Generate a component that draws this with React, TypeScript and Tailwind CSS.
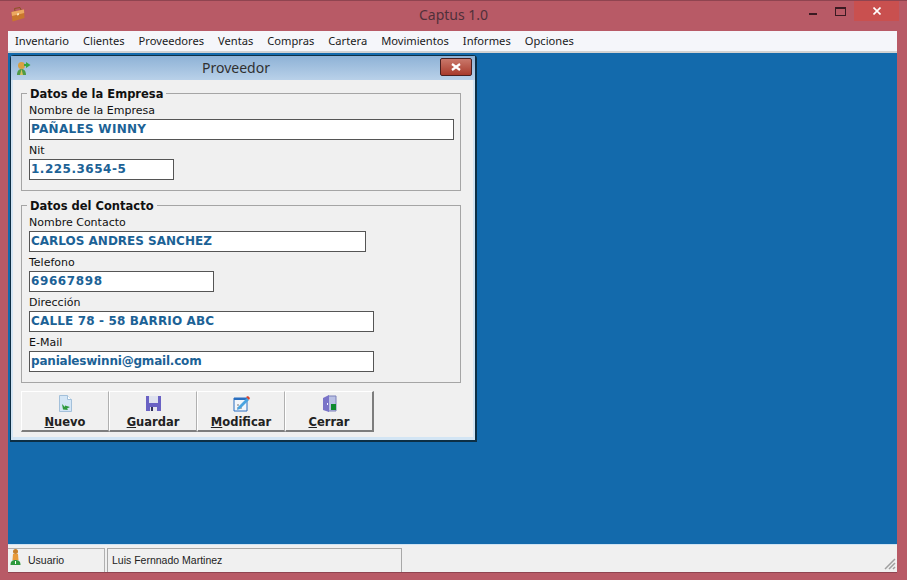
const sans = "font-['DejaVu_Sans',sans-serif]";

function Field({ label, value, width, mt, track }: { label: string; value: string; width: string; mt: string; track: string }) {
  return (
    <div className={mt}>
      <div className={`h-[13px] text-[11px] leading-[13px] text-[#111] whitespace-nowrap ${sans}`}>{label}</div>
      <div className={`${width} mt-[2px] h-[21px] bg-white border border-[#555] pl-[1px] text-[12px] leading-[18px] font-bold text-[#1c6296] whitespace-nowrap ${track} ${sans}`}>
        {value}
      </div>
    </div>
  );
}

function Group({ title, height, children, mt }: { title: string; height: string; children: React.ReactNode; mt: string }) {
  return (
    <div className={`relative ${height} ${mt} w-[440px] border border-[#a5a5a5] pl-[7px]`}>
      <div className={`absolute left-[5px] -top-[7px] bg-[#f0f0f0] px-[3px] text-[11.5px] leading-[14px] font-bold text-[#111] whitespace-nowrap ${sans}`}>{title}</div>
      {children}
    </div>
  );
}

function ToolButton({ icon, u, post, w, edge }: { icon: React.ReactNode; u: string; post: string; w: string; edge: string }) {
  return (
    <div className={`${w} h-[41px] flex flex-col items-center border-t border-l border-white border-b-2 border-b-[#7d7d7d] ${edge} bg-[#f0f0f0] pt-[3px]`}>
      <div className="h-[17px] w-[17px]">{icon}</div>
      <div className={`mt-[3px] text-[11.5px] leading-[14px] font-bold text-[#222] ${sans}`}>
        <span className="underline">{u}</span>{post}
      </div>
    </div>
  );
}

const NewIcon = (
  <svg viewBox="0 0 17 17" className="w-[17px] h-[17px]">
    <path d="M2.500.5h8l4 4v12h-12z" fill="#d4e6f6" stroke="#a3c0da" />
    <path d="M10.500.5v4h4" fill="#fff" stroke="#a3c0da" />
    <path d="M5 9l3 3V10.500l5 1.500-3 1.500 1 1.500-5-.5z" fill="#2f9a3e" />
  </svg>
);
const SaveIcon = (
  <svg viewBox="0 0 17 17" className="w-[17px] h-[17px]">
    <path d="M1 1h15v15H1z" fill="#6a62c4" />
    <path d="M4 1h9v7H4z" fill="#dfe2ee" />
    <path d="M5 12h7v4H5z" fill="#e6e6ef" />
    <path d="M6 12h2v4H6z" fill="#30305a" />
  </svg>
);
const EditIcon = (
  <svg viewBox="0 0 17 17" className="w-[17px] h-[17px]">
    <path d="M1 3h13v13H1z" fill="#f3f6fb" stroke="#2a6fc0" />
    <path d="M1 3h13v2H1z" fill="#2a6fc0" />
    <path d="M4 10h2M4 13h5" stroke="#777" />
    <path d="M5 12l9-9 2 2-9 9-3 1z" fill="#4aa3e0" />
    <path d="M13 2l2-1 2 2-1 2z" fill="#d8442e" />
  </svg>
);
const DoorIcon = (
  <svg viewBox="0 0 17 17" className="w-[17px] h-[17px]">
    <path d="M7 1h8v15H7z" fill="#b9c0e4" stroke="#7a80b8" />
    <path d="M2 3l6-3v17l-6-2z" fill="#7a74c8" />
    <path d="M10 9h5v6h-5z" fill="#0f8a2e" />
    <path d="M6 8h1v2H6z" fill="#f2f2ff" />
  </svg>
);
const BriefcaseIcon = (
  <svg viewBox="0 0 14 15" className="w-[14px] h-[15px]">
    <path d="M4 4L3.500 1.500 9 .5 10 3" fill="none" stroke="#8a5424" />
    <path d="M.5 5L13 2.500l.5 8.500L1.500 14.500z" fill="#c9772d" />
    <path d="M.5 5L13 2.500l.2 3.500L1 9z" fill="#eba860" />
    <path d="M6 6.500l2-.5v2l-2 .5z" fill="#f9e2b4" />
  </svg>
);
const PersonAddIcon = (
  <svg viewBox="0 0 15 15" className="w-[15px] h-[15px]">
    <circle cx="5.500" cy="4.500" r="3.500" fill="#d8a040" />
    <path d="M1 14c0-4 2-6 4.500-6S10 10 10 14z" fill="#4f9a45" />
    <path d="M4 14l1.500-6L7 14z" fill="#d8c060" />
    <path d="M10 1v2H8v2h2v2l4.500-3z" fill="#37a63f" />
  </svg>
);
const UserIcon = (
  <svg viewBox="0 0 11 18" className="w-[11px] h-[18px]">
    <circle cx="5.500" cy="3.500" r="2.500" fill="#c8802a" />
    <path d="M3 6h5l.5 6h-6z" fill="#e89a3a" />
    <path d="M.5 17c0-4 2-5 5-5s5 1 5 5z" fill="#2f9a3e" />
    <path d="M5 13h1v3H5z" fill="#fff" />
  </svg>
);

export default function App() {
  const menus = ["Inventario", "Clientes", "Proveedores", "Ventas", "Compras", "Cartera", "Movimientos", "Informes", "Opciones"];
  return (
    <div className={`w-[907px] h-[580px] overflow-hidden bg-[#b85a66] border-t border-t-[#8f4450] flex flex-col ${sans}`}>
      {/* Title bar */}
      <div className="h-[30px] shrink-0 flex items-start">
        <div className="w-[11px] shrink-0" />
        <div className="mt-[6px] w-[14px] shrink-0">{BriefcaseIcon}</div>
        <div className="flex-1 pl-[394px] pt-[5px] text-[14px] leading-[18px] text-[#50303a] font-['Noto_Sans',sans-serif] whitespace-nowrap">Captus 1.0</div>
        <div className="flex items-start shrink-0 mr-[8px]">
          <div className="mt-[12px] mr-[18px] w-[8px] h-[2px] bg-[#3a1a22]" />
          <div className="mt-[6px] mr-[8px] w-[11px] h-[9px] border border-[#3a1a22] border-t-2" />
          <div className="w-[45px] h-[20px] bg-[#c9504f] flex items-center justify-center">
            <svg viewBox="0 0 8 8" className="w-[8px] h-[8px]">
              <path d="M.5.5l7 7M7.500.5l-7 7" stroke="#fff" strokeWidth="1.600" />
            </svg>
          </div>
        </div>
      </div>

      {/* Client */}
      <div className="w-[889px] ml-[8px] flex-1 flex flex-col min-h-0 border-b border-b-[#8f4450] mb-[7px]">
        <div className="h-[20px] shrink-0 bg-[#f5f6fa] flex items-center pl-[7px] gap-[14px] text-[11.150px] leading-[14px] text-[#1a1a1a] font-['Noto_Sans',sans-serif] whitespace-nowrap">
          {menus.map((m) => (
            <span key={m}>{m}</span>
          ))}
        </div>
        <div className="h-[2px] shrink-0 bg-[#d2d2d2]" />

        {/* MDI area */}
        <div className="flex-1 min-h-0 bg-[#136aac] pl-[2px] pt-[2px] border-b border-b-[#cfe3f3]">
          <div className="w-[467px] h-[387px] rounded-t-[4px] border border-[#0d2f45] border-r-2 border-b-2 bg-[#d3e5f4] px-[2px] pb-[3px] flex flex-col">
            <div className="h-[24px] shrink-0 flex items-center bg-gradient-to-b from-[#8eb2d6] to-[#b9d1e9] -mx-[2px] pl-[5px] pr-[3px]">
              {PersonAddIcon}
              <div className="flex-1 text-center text-[14px] leading-[18px] text-[#303030] font-['Noto_Sans',sans-serif] pl-[1px]">Proveedor</div>
              <div className="w-[32px] h-[18px] -mt-[2px] rounded-[2px] border border-[#4a2020] bg-gradient-to-b from-[#c9776a] to-[#a83a2c] flex items-center justify-center">
                <svg viewBox="0 0 14 8" className="w-[14px] h-[8px]">
                  <path d="M3 1l8 6M11 1L3 7" stroke="#fff" strokeWidth="2.200" />
                </svg>
              </div>
            </div>
            <div className="flex-1 bg-[#f0f0f0] pl-[8px] pt-[13px]">
              <Group title="Datos de la Empresa" height="h-[98px]" mt="mt-0">
                <div className="pt-[10px]" />
                <Field label="Nombre de la Empresa" value="PAÑALES WINNY" width="w-[425px]" mt="mt-0" track="tracking-[0.3px]" />
                <Field label="Nit" value="1.225.3654-5" width="w-[145px]" mt="mt-[4px]" track="tracking-[0.5px]" />
              </Group>
              <Group title="Datos del Contacto" height="h-[178px]" mt="mt-[14px]">
                <div className="pt-[10px]" />
                <Field label="Nombre Contacto" value="CARLOS ANDRES SANCHEZ" width="w-[337px]" mt="mt-0" track="tracking-[0px]" />
                <Field label="Telefono" value="69667898" width="w-[185px]" mt="mt-[4px]" track="tracking-[0.6px]" />
                <Field label="Dirección" value="CALLE 78 - 58 BARRIO ABC" width="w-[345px]" mt="mt-[4px]" track="tracking-[0.15px]" />
                <Field label="E-Mail" value="panialeswinni@gmail.com" width="w-[345px]" mt="mt-[4px]" track="tracking-[-0.2px]" />
              </Group>
              <div className="flex mt-[8px]">
                <ToolButton icon={NewIcon} u="N" post="uevo" w="w-[88px]" edge="border-r border-r-[#b0b0b0]" />
                <ToolButton icon={SaveIcon} u="G" post="uardar" w="w-[88px]" edge="border-r border-r-[#b0b0b0]" />
                <ToolButton icon={EditIcon} u="M" post="odificar" w="w-[88px]" edge="border-r border-r-[#b0b0b0]" />
                <ToolButton icon={DoorIcon} u="C" post="errar" w="w-[89px]" edge="border-r-2 border-r-[#7d7d7d]" />
              </div>
            </div>
          </div>
        </div>

        {/* Status bar */}
        <div className="h-[27px] shrink-0 bg-[#f0f0f0] flex pt-[3px] text-[10.5px] leading-[22px] text-[#222] font-['Liberation_Sans',sans-serif] relative">
          <div className="w-[97px] h-[24px] border-t border-r border-[#b0b0b0] flex items-start pl-[2px]">
            <div className="w-[11px] -mt-[1px]">{UserIcon}</div>
            <span className="ml-[7px]">Usuario</span>
          </div>
          <div className="w-[295px] h-[24px] ml-[2px] border-t border-l border-r border-[#a8a8a8] pl-[4px]">Luis Fernnado Martinez</div>
          <svg viewBox="0 0 12 12" className="absolute right-[1px] bottom-[2px] w-[12px] h-[12px]">
            <path d="M1 11L11 1M5 11l6-6M9 11l2-2" stroke="#a0a0a0" strokeWidth="1.500" />
          </svg>
        </div>
      </div>
    </div>
  );
}
